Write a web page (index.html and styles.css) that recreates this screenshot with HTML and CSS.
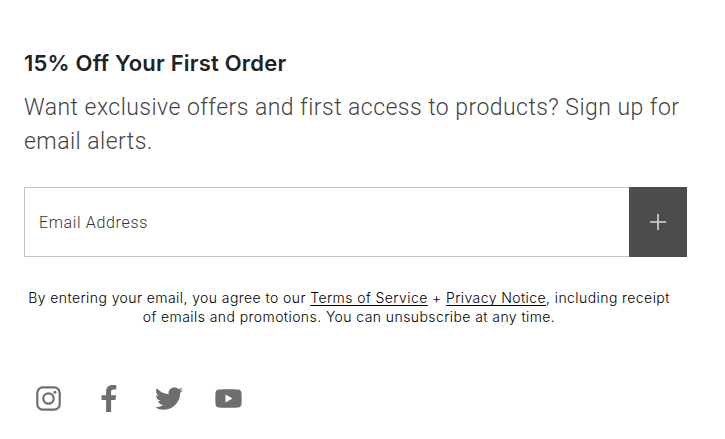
FILE: index.html
```html
<!DOCTYPE html>
<html lang="en">
<head>
  <meta charset="UTF-8" />
  <meta name="viewport" content="width=device-width, initial-scale=1.0"/>
  <title>Email Sign Up</title>
  <link rel="stylesheet" href="styles.css">
</head>
<body>
  <div class="signup">
    <h2 class="signup-title">15% Off Your First Order</h2>
    <p class="signup-text">Want exclusive offers and first access to products? Sign up for<br>email alerts.</p>

    <!-- Email form -->
    <form class="signup-form">
      <input class="signup-input" type="email" placeholder="Email Address" aria-label="Email Address">
      <button class="signup-button" type="submit" aria-label="Sign up">
        <svg width="16" height="16" viewBox="0 0 16 16"><path d="M8 0v16M0 8h16" stroke="#d6d6d6" stroke-width="1.6"/></svg>
      </button>
    </form>

    <p class="legal">By entering your email, you agree to our <a href="#">Terms of Service</a> + <a href="#">Privacy Notice</a>, including receipt<br>of emails and promotions. You can unsubscribe at any time.</p>

    <!-- Social links -->
    <div class="social">
      <a href="#" aria-label="Instagram">
        <svg width="25" height="25" viewBox="0 0 25 25">
          <rect x="1.3" y="1.3" width="22.4" height="22.4" rx="5.5" fill="none" stroke="#6e6e6e" stroke-width="2.2"/>
          <circle cx="12.5" cy="12.5" r="5.2" fill="none" stroke="#6e6e6e" stroke-width="2.2"/>
          <circle cx="18.9" cy="6.2" r="1.5" fill="#6e6e6e"/>
        </svg>
      </a>
      <a href="#" aria-label="Facebook">
        <svg width="16" height="27" viewBox="0 0 16 27">
          <path d="M5.100 27V15H.5v-4.700h4.600V6.500C5.100 2.300 7.600 0 11.400 0c1.800 0 3.400.1 3.900.2v4.400h-2.700c-2.100 0-2.500 1-2.500 2.500v3.200h5.100L14.500 15h-4.400v12z" fill="#6e6e6e"/>
        </svg>
      </a>
      <a href="#" aria-label="Twitter">
        <svg width="28" height="23" viewBox="0 2 24 20" preserveAspectRatio="none">
          <path d="M23.950 4.570a10 10 0 0 1-2.820.780 4.960 4.960 0 0 0 2.160-2.730c-.950.560-2 .960-3.130 1.190a4.920 4.920 0 0 0-8.380 4.480C7.690 8.090 4.070 6.130 1.640 3.160a4.820 4.820 0 0 0-.670 2.480c0 1.710.870 3.210 2.190 4.100a4.900 4.900 0 0 1-2.230-.620v.060a4.920 4.920 0 0 0 3.950 4.830 5 5 0 0 1-2.210.080 4.940 4.940 0 0 0 4.600 3.420A9.870 9.870 0 0 1 0 19.540a13.990 13.990 0 0 0 7.550 2.210c9.050 0 14-7.500 14-13.990 0-.210 0-.420-.020-.630a9.940 9.940 0 0 0 2.460-2.550z" fill="#6e6e6e"/>
        </svg>
      </a>
      <a href="#" aria-label="YouTube">
        <svg width="27" height="19" viewBox="0 0 27 19">
          <path d="M4 .5C9 .100 18 .100 23 .500c2.200.2 3.300 1.500 3.500 3.600.3 3.600.3 7.200 0 10.800-.2 2.100-1.300 3.400-3.500 3.600-5 .4-14 .4-19 0-2.200-.2-3.300-1.500-3.500-3.600-.3-3.600-.3-7.200 0-10.800C.7 2 1.800.7 4 .500zM10.500 5.500v8l7-4z" fill="#6e6e6e" fill-rule="evenodd"/>
        </svg>
      </a>
    </div>
  </div>
</body>
</html>
```
FILE: styles.css
```css
body {
  font-family: Inter, sans-serif;
  margin: 0;
  background-color: #fff;
  color: #222;
}

.signup {
  width: 663px;
  padding: 48px 0 0 24px;
}

.signup-title {
  margin: 0;
  font-size: 22px;
  font-weight: 600;
  line-height: 30px;
  letter-spacing: 0.2px;
}

.signup-text {
  margin: 13px 0 28px;
  font-family: Roboto, sans-serif;
  font-size: 23px;
  font-weight: 300;
  line-height: 34px;
  letter-spacing: 0.46px;
  color: #444;
  white-space: nowrap;
}

.signup-form {
  display: flex;
  height: 70px;
}

.signup-input {
  flex: 1;
  box-sizing: border-box;
  padding: 0 14px;
  border: 1px solid #c4c4c4;
  border-right: 0;
  border-radius: 0;
  font-family: Roboto, sans-serif;
  font-size: 16px;
  font-weight: 300;
  letter-spacing: 0.65px;
}

.signup-input::placeholder {
  color: #333;
}

.signup-button {
  display: flex;
  align-items: center;
  justify-content: center;
  width: 58px;
  padding: 0;
  border: 0;
  background-color: #4c4c4c;
  cursor: pointer;
}

.legal {
  margin: 31px 0 0;
  padding-right: 13px;
  font-size: 14px;
  font-weight: 300;
  line-height: 19px;
  letter-spacing: 0.42px;
  text-align: center;
  white-space: nowrap;
  color: #000;
}

.legal a {
  color: #000;
  text-underline-offset: 2px;
  text-decoration-skip-ink: none;
}

.social {
  display: flex;
  gap: 10px;
  margin: 47px 0 0 -0.5px;
}

.social a {
  display: flex;
  align-items: center;
  justify-content: center;
  width: 50px;
  height: 50px;
}
```
